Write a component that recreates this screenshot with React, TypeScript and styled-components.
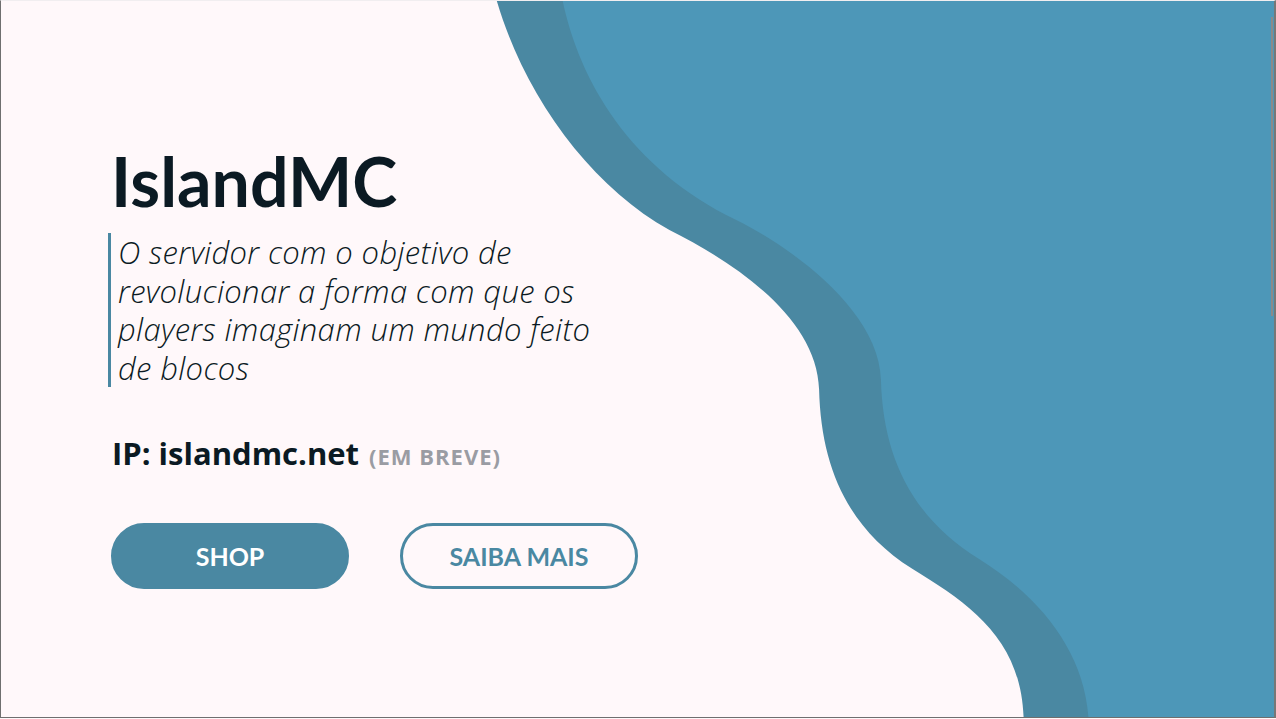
import React from "react";
import styled, { createGlobalStyle } from "styled-components";

const GlobalStyle = createGlobalStyle`
  html, body {
    margin: 0;
    padding: 0;
  }
  body {
    background: #fff8fa;
    font-family: Lato, "Open Sans", sans-serif;
    overflow: hidden;
  }
`;

const Page = styled.div`
  position: relative;
  box-sizing: border-box;
  width: 100vw;
  height: 718px;
  overflow: hidden;
  background: #fff8fa;
  border-top: 1px solid #f1eef0;
  border-left: 1px solid #6f6f6f;
  border-right: 2px solid #777777;
  border-bottom: 1px solid #6f6f6f;
`;

const Waves = styled.svg`
  position: absolute;
  inset: 0;
  width: 100%;
  height: 100%;
  z-index: 0;
`;

const ScrollThumb = styled.div`
  position: absolute;
  top: 16px;
  right: 1px;
  width: 2px;
  height: 299px;
  background: #8a8a8a;
  z-index: 2;
`;

const Content = styled.main`
  position: relative;
  z-index: 1;
  display: flex;
  flex-direction: column;
  align-items: flex-start;
  padding: 146px 0 0 107px;
`;

const Title = styled.h1`
  margin: 0 0 0 3px;
  font-size: 68px;
  line-height: 1;
  font-weight: 700;
  color: #0b1a23;
`;

const Tagline = styled.p`
  margin: 18px 0 0 0;
  padding-left: 7px;
  border-left: 3px solid #4a88a2;
  font-family: "Open Sans", Lato, sans-serif;
  font-size: 31px;
  letter-spacing: 0.35px;
  line-height: 38.5px;
  font-style: italic;
  font-weight: 300;
  color: #0b1a23;
`;

const Address = styled.div`
  margin: 51px 0 0 4px;
  display: flex;
  align-items: baseline;
  gap: 10px;
  font-family: "Open Sans", Lato, sans-serif;
  font-size: 31px;
  line-height: 1;
  font-weight: 700;
  color: #0b1a23;
`;

const Soon = styled.span`
  font-size: 22px;
  font-weight: 700;
  letter-spacing: 1px;
  color: #9a9ca3;
`;

const Actions = styled.div`
  display: flex;
  gap: 51px;
  margin: 54px 0 0 3px;
`;

const Button = styled.button<{ $outline?: boolean }>`
  box-sizing: border-box;
  width: 238px;
  height: 66px;
  border-radius: 33px;
  font-family: inherit;
  font-size: 25px;
  font-weight: 700;
  text-transform: uppercase;
  cursor: pointer;
  border: 3px solid #4a88a2;
  background: ${(p) => (p.$outline ? "transparent" : "#4a88a2")};
  color: ${(p) => (p.$outline ? "#4a88a2" : "#ffffff")};
`;

export default function App() {
  return (
    <>
      <GlobalStyle />
      <Page>
        <Waves viewBox="0 0 1276 719" preserveAspectRatio="none">
          <path
            fill="#4a88a2"
            d="M497,0 C525,95 590,185 670,230 C740,265 818,320 820,390 C822,470 850,530 913,570 C970,605 1022,640 1025,719 L1276,719 L1276,0 Z"
          />
          <path
            fill="#4d97b8"
            d="M563,0 C580,80 630,168 737,220 C790,246 880,310 882,380 C884,460 915,520 980,560 C1038,596 1085,650 1090,719 L1276,719 L1276,0 Z"
          />
        </Waves>
        <ScrollThumb />
        <Content>
          <Title>IslandMC</Title>
          <Tagline>
            O servidor com o objetivo de
            <br />
            revolucionar a forma com que os
            <br />
            players imaginam um mundo feito
            <br />
            de blocos
          </Tagline>
          <Address>
            IP: islandmc.net <Soon>(EM BREVE)</Soon>
          </Address>
          <Actions>
            <Button>Shop</Button>
            <Button $outline>Saiba mais</Button>
          </Actions>
        </Content>
      </Page>
    </>
  );
}
